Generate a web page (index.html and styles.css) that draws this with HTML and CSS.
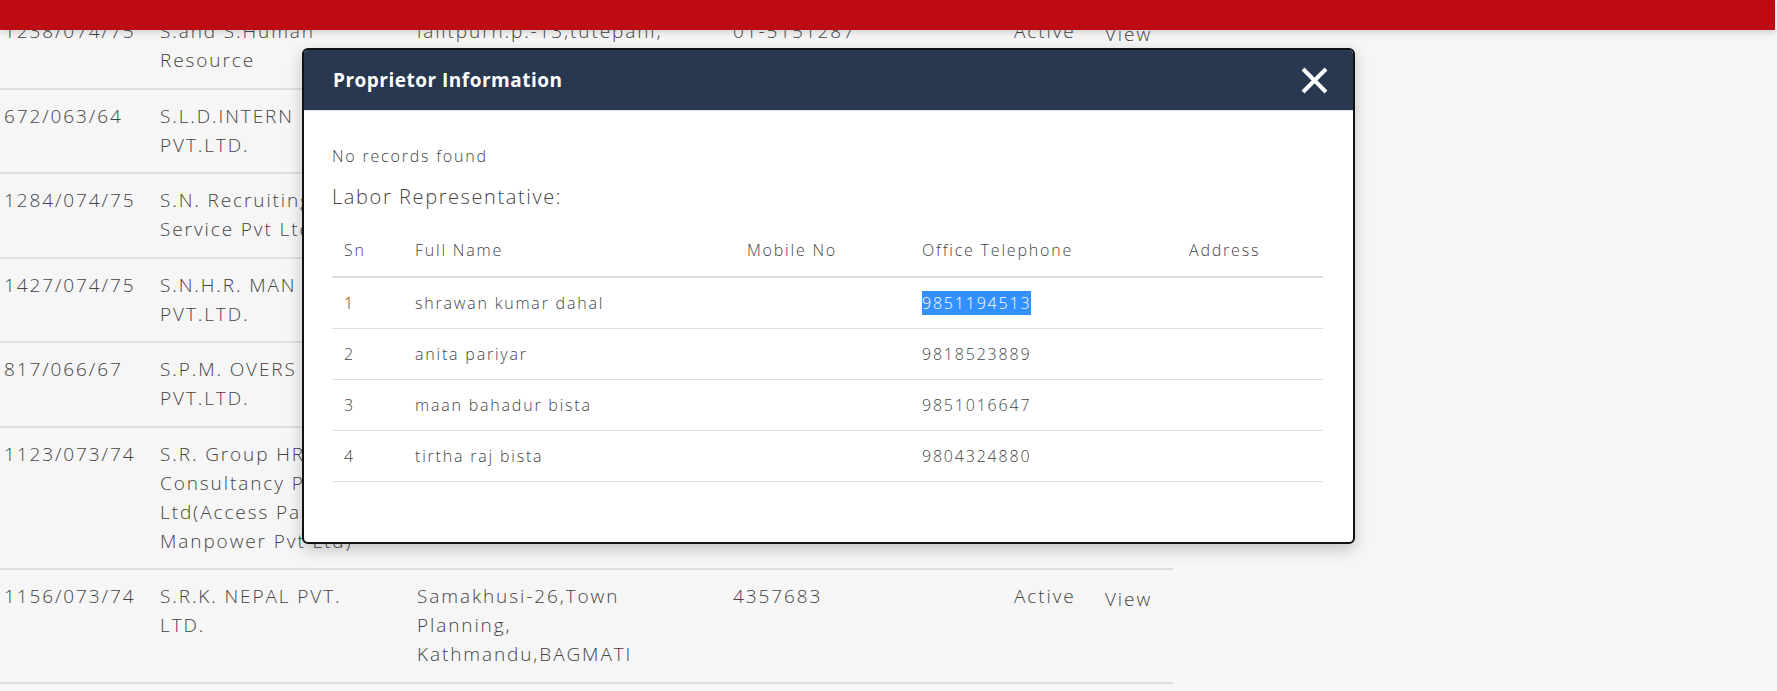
FILE: index.html
```html
<!DOCTYPE html>
<html lang="en">
<head>
<meta charset="utf-8">
<title>Agencies</title>
<link rel="stylesheet" href="styles.css">
</head>
<body>
<div class="topbar"></div>

<div class="listing">
  <div class="row">
    <div class="cell">1238/074/75</div>
    <div class="cell">S.and S.Human<br>Resource</div>
    <div class="cell">lalitpurn.p.-13,tutepani,</div>
    <div class="cell">01-5151287</div>
    <div class="cell">Active</div>
    <div class="cell action">View</div>
  </div>
  <div class="row">
    <div class="cell">672/063/64</div>
    <div class="cell">S.L.D.INTERN<br>PVT.LTD.</div>
    <div class="cell"></div>
    <div class="cell"></div>
    <div class="cell"></div>
    <div class="cell action"></div>
  </div>
  <div class="row">
    <div class="cell">1284/074/75</div>
    <div class="cell">S.N. Recruiting<br>Service Pvt Ltd</div>
    <div class="cell"></div>
    <div class="cell"></div>
    <div class="cell"></div>
    <div class="cell action"></div>
  </div>
  <div class="row">
    <div class="cell">1427/074/75</div>
    <div class="cell">S.N.H.R. MAN<br>PVT.LTD.</div>
    <div class="cell"></div>
    <div class="cell"></div>
    <div class="cell"></div>
    <div class="cell action"></div>
  </div>
  <div class="row">
    <div class="cell">817/066/67</div>
    <div class="cell">S.P.M. OVERS<br>PVT.LTD.</div>
    <div class="cell"></div>
    <div class="cell"></div>
    <div class="cell"></div>
    <div class="cell action"></div>
  </div>
  <div class="row">
    <div class="cell">1123/073/74</div>
    <div class="cell">S.R. Group HR<br>Consultancy P<br>Ltd(Access Pa<br>Manpower Pvt Ltd)</div>
    <div class="cell"></div>
    <div class="cell"></div>
    <div class="cell"></div>
    <div class="cell action"></div>
  </div>
  <div class="row">
    <div class="cell">1156/073/74</div>
    <div class="cell">S.R.K. NEPAL PVT.<br>LTD.</div>
    <div class="cell">Samakhusi-26,Town<br>Planning,<br>Kathmandu,BAGMATI</div>
    <div class="cell">4357683</div>
    <div class="cell">Active</div>
    <div class="cell action">View</div>
  </div>
</div>

<div class="modal">
  <div class="modal-header">
    <h4 class="modal-title">Proprietor Information</h4>
    <button class="close" type="button" aria-label="Close">
      <svg width="27" height="27" viewBox="0 0 27 27"><path d="M2 2 L25 25 M25 2 L2 25" stroke="#fff" stroke-width="4" fill="none"/></svg>
    </button>
  </div>
  <div class="modal-body">
    <p class="empty">No records found</p>
    <h5 class="section-title">Labor Representative:</h5>
    <table class="reps">
      <colgroup>
        <col class="col-sn"><col class="col-name"><col class="col-mobile"><col class="col-office"><col>
      </colgroup>
      <thead>
        <tr><th>Sn</th><th>Full Name</th><th>Mobile No</th><th>Office Telephone</th><th>Address</th></tr>
      </thead>
      <tbody>
        <tr><td>1</td><td>shrawan kumar dahal</td><td></td><td><span class="sel">9851194513</span></td><td></td></tr>
        <tr><td>2</td><td>anita pariyar</td><td></td><td>9818523889</td><td></td></tr>
        <tr><td>3</td><td>maan bahadur bista</td><td></td><td>9851016647</td><td></td></tr>
        <tr><td>4</td><td>tirtha raj bista</td><td></td><td>9804324880</td><td></td></tr>
      </tbody>
    </table>
  </div>
</div>
</body>
</html>
```

FILE: styles.css
```css
html, body {
  margin: 0;
  padding: 0;
}

body {
  background: #f6f6f6;
  font-family: "Open Sans", "Liberation Sans", sans-serif;
  font-weight: 300;
  color: #444;
  overflow: hidden;
}

.topbar {
  position: fixed;
  top: 0;
  left: 0;
  right: 2px;
  height: 30px;
  background: #bd0a13;
  box-shadow: 0 2px 7px rgba(0, 0, 0, 0.16);
  z-index: 10;
}

.listing {
  width: 1173px;
  padding-top: 5px;
  font-size: 19px;
  letter-spacing: 1.9px;
}

.row {
  display: grid;
  grid-template-columns: 156px 257px 316px 281px 91px 1fr;
  padding-left: 4px;
  border-bottom: 2px solid #dedede;
}

.cell {
  padding: 12.25px 0;
  line-height: 29px;
  white-space: nowrap;
}

.action {
  padding-top: 15px;
}

.modal {
  position: absolute;
  top: 48px;
  left: 302px;
  width: 1053px;
  box-sizing: border-box;
  border: 2px solid #111;
  border-radius: 6px;
  background: #fff;
  box-shadow: 0 5px 15px rgba(0, 0, 0, 0.22);
  overflow: hidden;
  z-index: 5;
}

.modal-header {
  height: 60px;
  display: flex;
  align-items: center;
  justify-content: space-between;
  padding: 0 25px 0 29px;
  background: #283850;
  border-bottom: 1px solid #e3e3e3;
}

.modal-title {
  margin: 0;
  color: #fff;
  font-weight: 700;
  font-size: 19px;
  letter-spacing: 0.5px;
}

.close {
  display: flex;
  padding: 0;
  border: 0;
  background: none;
}

.modal-body {
  padding: 33px 30px 60px 28px;
}

.empty {
  margin: 0;
  font-size: 16px;
  line-height: 24px;
  letter-spacing: 1.8px;
}

.section-title {
  margin: 16px 0 0;
  font-size: 20px;
  line-height: 26px;
  font-weight: 300;
  letter-spacing: 1.6px;
}

.reps {
  width: 100%;
  margin-top: 14px;
  border-collapse: collapse;
  table-layout: fixed;
  font-size: 16px;
  letter-spacing: 1.8px;
}

.col-sn { width: 71px; }
.col-name { width: 332px; }
.col-mobile { width: 175px; }
.col-office { width: 267px; }

.reps th {
  text-align: left;
  font-weight: 300;
  padding: 14px 12px;
  line-height: 24px;
  border-bottom: 2px solid #ddd;
}

.reps td {
  padding: 13px 12px;
  line-height: 24px;
  border-bottom: 1px solid #ddd;
}

.sel {
  background: #3390ff;
  color: #fff;
  padding: 1px 0;
}
```
